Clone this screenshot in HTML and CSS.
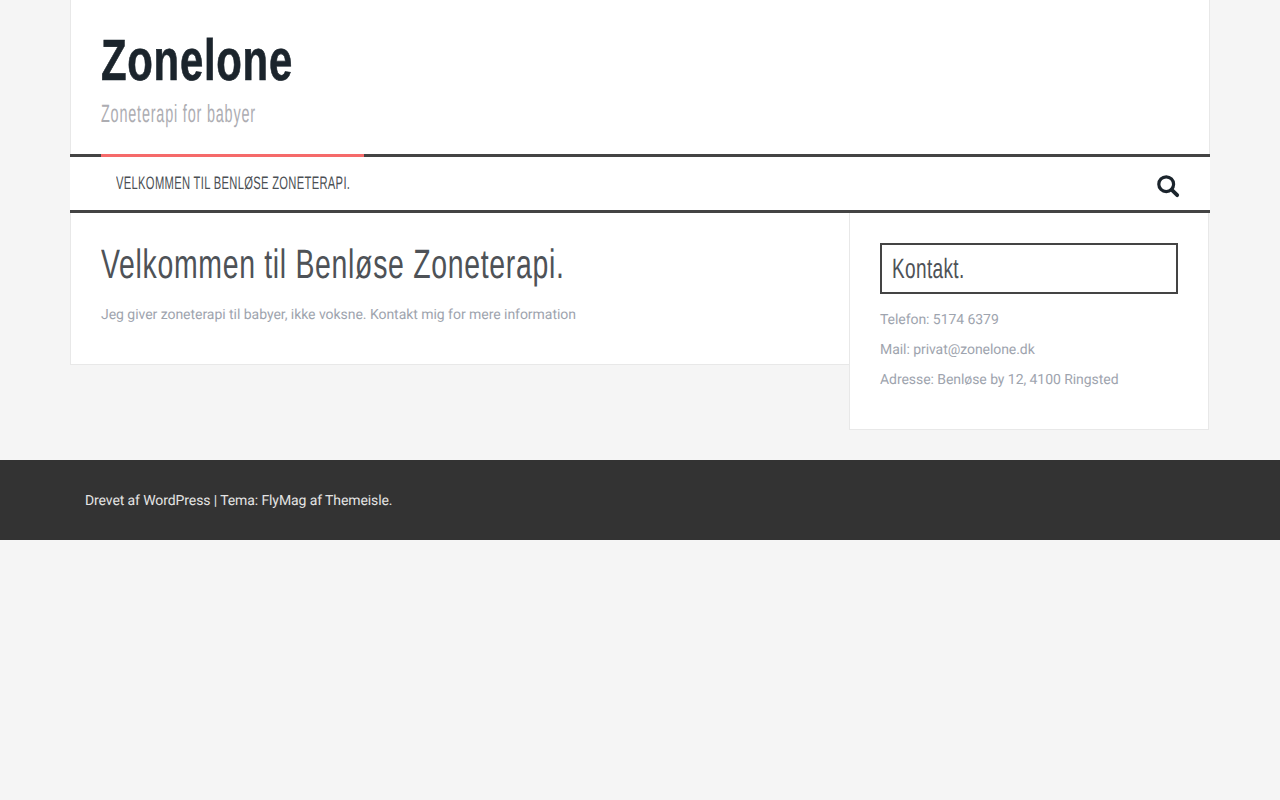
FILE: index.html
```html
<!DOCTYPE html>
<html lang="da">
  <head>
    <meta charset="UTF-8" />
    <meta name="viewport" content="width=device-width, initial-scale=1.0" />
    <title>Zonelone</title>
    <link rel="stylesheet" href="styles.css">
  </head>
  <body>
    <div class="wrapper">
      <header class="site-header">
        <h1 class="site-title"><span class="narrow">Zonelone</span></h1>
        <p class="site-tagline"><span class="narrow">Zoneterapi for babyer</span></p>
      </header>

      <nav class="main-nav">
        <a class="nav-item" href="#"><span class="narrow">VELKOMMEN TIL BENLØSE ZONETERAPI.</span></a>
        <button class="search-btn" aria-label="Søg">
          <svg width="24" height="24" viewBox="0 0 24 24" fill="none" stroke="#1b242c">
            <circle cx="10.2" cy="10.2" r="7.4" stroke-width="3.2" />
            <path d="M15.8 15.8 L21.2 21.2" stroke-width="3.8" stroke-linecap="round" />
          </svg>
        </button>
      </nav>

      <div class="content">
        <main class="main-col">
          <h2 class="page-title"><span class="narrow">Velkommen til Benløse Zoneterapi.</span></h2>
          <p class="page-text">Jeg giver zoneterapi til babyer, ikke voksne. Kontakt mig for mere information</p>
        </main>
        <aside class="sidebar">
          <h3 class="widget-title"><span class="narrow">Kontakt.</span></h3>
          <p class="widget-line">Telefon: 5174 6379</p>
          <p class="widget-line">Mail: privat@zonelone.dk</p>
          <p class="widget-line">Adresse: Benløse by 12, 4100 Ringsted</p>
        </aside>
      </div>
    </div>

    <footer class="site-footer">
      <div class="footer-inner">Drevet af WordPress | Tema: FlyMag af Themeisle.</div>
    </footer>
  </body>
</html>
```

FILE: styles.css
```css
* {
  box-sizing: border-box;
}

body {
  margin: 0;
  background-color: #f5f5f5;
  font-family: Roboto, "Liberation Sans", sans-serif;
  font-size: 14px;
  color: #9ea4ae;
  text-rendering: geometricPrecision;
}

.wrapper {
  width: 1140px;
  margin: 0 auto;
}

.site-header {
  height: 154px;
  padding: 30px 30px 0;
  background-color: #fff;
  border-left: 1px solid #e8e8e8;
  border-right: 1px solid #e8e8e8;
}

.site-title,
.site-tagline,
.page-title,
.widget-title,
.nav-item {
  font-family: "Liberation Sans", sans-serif;
}

/* no condensed face installed, so the headings get squeezed */
.narrow {
  display: block;
  white-space: nowrap;
  transform-origin: left center;
}

.site-title {
  margin: 0;
  font-size: 58px;
  line-height: 62px;
  font-weight: 700;
  letter-spacing: 1px;
  color: #1b242c;
  -webkit-text-stroke: 0.7px #1b242c;
}

.site-title .narrow {
  transform: scaleX(0.722);
}

.site-tagline {
  margin: 7px 0 0;
  font-size: 25px;
  line-height: 30px;
  letter-spacing: 1.4px;
  color: #adadb2;
}

.site-tagline .narrow {
  transform: scaleX(0.577);
}

.main-nav {
  display: flex;
  justify-content: space-between;
  align-items: stretch;
  height: 59px;
  padding: 0 30px 0 31px;
  background-color: #fff;
  border-top: 3px solid #444;
  border-bottom: 3px solid #444;
}

.nav-item {
  width: 263px;
  margin-top: -3px;
  padding: 3px 15px 0;
  border-top: 3px solid #f56a6a;
  font-size: 18px;
  line-height: 47px;
  letter-spacing: 0.5px;
  color: #4b4f54;
  text-decoration: none;
}

.nav-item .narrow {
  transform: scaleX(0.622);
}

.search-btn {
  display: flex;
  align-items: center;
  padding: 4px 0 0;
  border: none;
  background: none;
}

.content {
  display: flex;
  align-items: flex-start;
}

.main-col {
  width: 779px;
  height: 152px;
  padding: 29px 30px 0;
  background-color: #fff;
  border-left: 1px solid #e8e8e8;
  border-bottom: 1px solid #e8e8e8;
}

.page-title {
  margin: 0;
  font-size: 41px;
  line-height: 44px;
  font-weight: 400;
  letter-spacing: 1px;
  color: #4e5257;
}

.page-title .narrow {
  transform: scaleX(0.693);
}

.page-text {
  margin: 17px 0 0;
  line-height: 24px;
  letter-spacing: -0.04px;
}

.sidebar {
  width: 360px;
  height: 217px;
  padding: 30px 30px 0;
  background-color: #fff;
  border-left: 1px solid #e8e8e8;
  border-right: 1px solid #e8e8e8;
  border-bottom: 1px solid #e8e8e8;
}

.widget-title {
  height: 51px;
  margin: 0 0 11px;
  padding: 0 10px;
  border: 2px solid #444;
  font-size: 28px;
  line-height: 47px;
  font-weight: 400;
  letter-spacing: 0.5px;
  color: #4e5257;
}

.widget-title .narrow {
  transform: scaleX(0.68);
}

.widget-line {
  margin: 0;
  line-height: 30px;
  letter-spacing: -0.06px;
}

.site-footer {
  height: 80px;
  margin-top: 30px;
  background-color: #333;
}

.footer-inner {
  width: 1140px;
  margin: 0 auto;
  padding: 1px 0 0 15px;
  line-height: 80px;
  letter-spacing: -0.1px;
  color: #e4e4e4;
}
```
